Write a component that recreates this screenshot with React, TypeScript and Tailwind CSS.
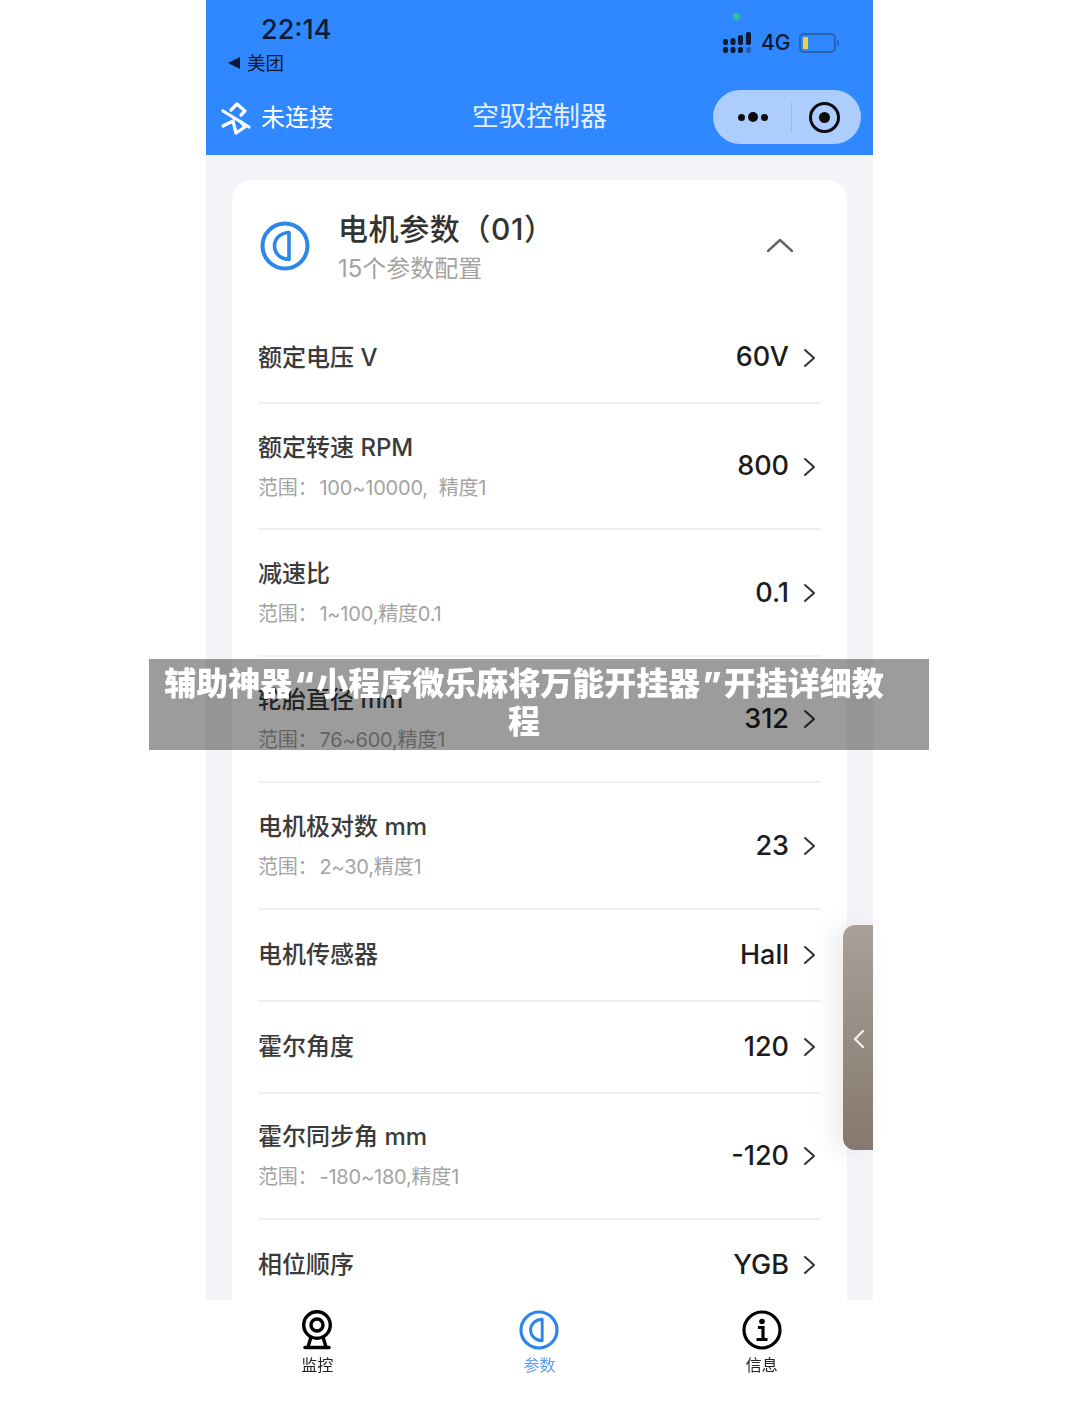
const font = { fontFamily: '"Inter","Noto Sans CJK SC",sans-serif' };

function Half({ className }: { className: string }) {
  return (
    <svg viewBox="0 0 50 50" className={className} fill="none" stroke="#2f86ea">
      <circle cx="25" cy="25" r="22.5" strokeWidth="4" />
      <path d="M29 11.5 V38.5 C20 38 14.5 32 14.5 25 C14.5 18 20 12 29 11.5 Z" strokeWidth="3.6" strokeLinejoin="round" />
    </svg>
  );
}

function Chevron() {
  return (
    <svg viewBox="0 0 14 20" className="w-[14px] h-[20px] ml-[13px] mr-[5px]" fill="none" stroke="#333" strokeWidth="2" strokeLinecap="round" strokeLinejoin="round">
      <path d="M3 2 L12 10 L3 18" />
    </svg>
  );
}

type R = { label: string; hint?: string; value: string };
const rows: R[] = [
  { label: "额定电压 V", value: "60V" },
  { label: "额定转速 RPM", hint: "100~10000,\u00a0\u00a0精度1", value: "800" },
  { label: "减速比", hint: "1~100,精度0.1", value: "0.1" },
  { label: "轮胎直径 mm", hint: "76~600,精度1", value: "312" },
  { label: "电机极对数 mm", hint: "2~30,精度1", value: "23" },
  { label: "电机传感器", value: "Hall" },
  { label: "霍尔角度", value: "120" },
  { label: "霍尔同步角 mm", hint: "-180~180,精度1", value: "-120" },
  { label: "相位顺序", value: "YGB" },
];

function Row({ r }: { r: R }) {
  return (
    <div className={`flex items-center justify-between border-b-2 border-[#eef0f2] ${r.hint ? "h-[126.4px]" : "h-[92px]"}`}>
      <div className="flex flex-col pt-[1px]">
        <div className="text-[24px] leading-[32px] font-medium text-[#3b3b3b]">{r.label}</div>
        {r.hint && (
          <div className="text-[20px] leading-[28px] mt-[10px] tracking-[-0.2px] text-[#a3a3a3]">
            <span className="mr-[2px]">范围：</span>
            {r.hint}
          </div>
        )}
      </div>
      <div className="flex items-center pt-[1px]">
        <span className="text-[27px] font-medium text-[#1c1c1c]">{r.value}</span>
        <Chevron />
      </div>
    </div>
  );
}

export default function App() {
  return (
    <div className="relative w-[1080px] h-[1410px] bg-white overflow-hidden" style={font}>
      <div className="blur-[0.4px]">
        <div className="w-[667px] ml-[206px] h-[1300px] flex flex-col overflow-hidden bg-[#f4f4f9]">
          {/* header */}
          <div className="h-[155px] bg-[#2f88ff] relative shrink-0">
            <div className="absolute left-[55px] top-[13px] text-[27px] leading-[34px] font-medium text-[#0c1a33]">22:14</div>
            <div className="absolute left-[22px] top-[51px] flex items-center gap-[7px] text-[18.5px] leading-[24px] text-[#0c1a33]">
              <span className="w-0 h-0 border-y-[6px] border-y-transparent border-r-[12px] border-r-[#0c1a33]" />
              美团
            </div>
            <div className="absolute left-[527px] top-[13px] w-[7px] h-[7px] rounded-full bg-[#2fc58a]" />
            <div className="absolute left-[517px] top-[30px] flex items-center">
              <svg viewBox="0 0 30 22" className="w-[30px] h-[22px]" fill="#0c1a33">
                <rect x="0" y="7" width="5" height="6" rx="2" /><rect x="0" y="15" width="5" height="6" rx="2" />
                <rect x="7.5" y="6" width="5" height="7" rx="2" /><rect x="7.5" y="15" width="5" height="6" rx="2" />
                <rect x="15" y="3" width="5" height="10" rx="2" /><rect x="15" y="15" width="5" height="6" rx="2" />
                <rect x="23" y="0" width="5" height="13" rx="2" /><rect x="23" y="15" width="5" height="6" rx="2" fill="#1f5fb5" />
              </svg>
              <span className="ml-[8px] text-[21px] leading-[26px] font-medium text-[#0c1a33]">4G</span>
              <div className="ml-[9px] w-[37px] h-[20px] rounded-[5px] border-2 border-[#2a62b0] p-[2px]">
                <div className="w-[5px] h-full bg-[#f5d033]" />
              </div>
              <div className="w-[2px] h-[6px] ml-[1px] bg-[#2a62b0] rounded-r" />
            </div>
            <div className="absolute left-[14px] top-[101px] flex items-center gap-[9px] text-white">
              <svg viewBox="0 0 32 32" className="w-[32px] h-[34px]" fill="none" stroke="white" strokeWidth="3.2" strokeLinecap="round" strokeLinejoin="round">
                <path d="M3 9 L29 25" />
                <path d="M3 24 L13 19 L16 31 L25 25 L21 20" />
                <path d="M11 8 L17 2 L25 9 L21 13" />
              </svg>
              <span className="text-[24px] leading-[34px]">未连接</span>
            </div>
            <div className="absolute left-0 right-0 top-[99px] text-center text-[27px] leading-[36px] text-[#e4efff]">空驭控制器</div>
            <div className="absolute left-[507px] top-[90px] w-[148px] h-[54px] rounded-full bg-[#aecdff] flex items-center">
              <div className="w-[78px] flex items-center justify-center gap-[3px] pl-[1px]">
                <span className="w-[7px] h-[7px] rounded-full bg-[#0c0c0c]" />
                <span className="w-[10px] h-[10px] rounded-full bg-[#0c0c0c]" />
                <span className="w-[7px] h-[7px] rounded-full bg-[#0c0c0c]" />
              </div>
              <div className="w-px h-[30px] bg-[#9ab9ea]" />
              <div className="flex-1 flex items-center justify-center pr-[4px]">
                <div className="w-[31px] h-[31px] rounded-full border-[3px] border-[#0c0c0c] flex items-center justify-center">
                  <span className="w-[11px] h-[11px] rounded-full bg-[#0c0c0c]" />
                </div>
              </div>
            </div>
          </div>
          {/* card */}
          <div className="flex-1 px-[26px] pt-[25px] overflow-hidden">
            <div className="bg-white rounded-t-[20px] px-[26px] pb-[40px]">
              <div className="h-[132px] flex items-center relative">
                <Half className="w-[50px] h-[50px] ml-[2px]" />
                <div className="ml-[28px] mt-[2px]">
                  <div className="text-[30px] leading-[40px] font-medium tracking-[0.6px] text-[#333]">电机参数（01）</div>
                  <div className="text-[24px] leading-[32px] mt-[4px] text-[#a3a3a3]">15个参数配置</div>
                </div>
                <svg viewBox="0 0 28 16" className="absolute right-[27px] top-[57px] w-[28px] h-[16px]" fill="none" stroke="#666" strokeWidth="2.4" strokeLinecap="round" strokeLinejoin="round">
                  <path d="M2 14 L14 3 L26 14" />
                </svg>
              </div>
              {rows.map((r) => <Row key={r.label} r={r} />)}
            </div>
          </div>
        </div>
        {/* nav */}
        <div className="ml-[206px] w-[667px] h-[110px] flex pt-[10px]">
          <div className="flex-1 flex flex-col items-center">
            <svg viewBox="0 0 32 40" className="w-[32px] h-[40px]" fill="none" stroke="#000" strokeWidth="3.4">
              <circle cx="16" cy="15" r="13.3" />
              <circle cx="16" cy="15" r="6" />
              <path d="M10 27 L7 37 M22 27 L25 37" />
              <path d="M4 37.5 H28" strokeWidth="3.5" strokeLinecap="round" />
            </svg>
            <span className="text-[16px] leading-[24px] text-[#222] mt-[3px]">监控</span>
          </div>
          <div className="flex-1 flex flex-col items-center">
            <Half className="w-[40px] h-[40px]" />
            <span className="text-[16px] leading-[24px] text-[#5b9cf0] mt-[3px]">参数</span>
          </div>
          <div className="flex-1 flex flex-col items-center">
            <svg viewBox="0 0 40 40" className="w-[40px] h-[40px]" fill="none" stroke="#000" strokeWidth="3.2">
              <circle cx="20" cy="20" r="18" />
              <circle cx="20" cy="11.5" r="2.8" fill="#000" stroke="none" />
              <path d="M16 17.5 H21 V29 M14.5 29.5 H25.5" strokeWidth="3.2" />
            </svg>
            <span className="text-[16px] leading-[24px] text-[#222] mt-[3px]">信息</span>
          </div>
        </div>
      </div>
      {/* side tab */}
      <div className="absolute left-[843px] top-[925px] w-[30px] h-[225px] rounded-l-[12px] bg-gradient-to-b from-[#aaa097] to-[#85796f] flex items-center justify-center shadow-[-10px_0_24px_rgba(0,0,0,0.08)]">
        <svg viewBox="0 0 12 20" className="w-[12px] h-[20px] mt-[2px] ml-[2px]" fill="none" stroke="#f2efec" strokeWidth="2.4" strokeLinecap="round" strokeLinejoin="round">
          <path d="M10 2 L2 10 L10 18" />
        </svg>
      </div>
      {/* overlay */}
      <div className="absolute left-[149px] top-[659px] w-[780px] h-[91px]">
        <div className="absolute inset-0 bg-[#9c9c9c] mix-blend-multiply" />
        <div className="relative pl-[5px] pr-[35px] pt-[6px] text-center text-[32px] leading-[38px] font-black text-white">
          辅助神器<span className="mx-[2px]">“</span>小程序微乐麻将万能开挂器<span className="mx-[2px]">”</span>开挂详细教程
        </div>
      </div>
    </div>
  );
}
